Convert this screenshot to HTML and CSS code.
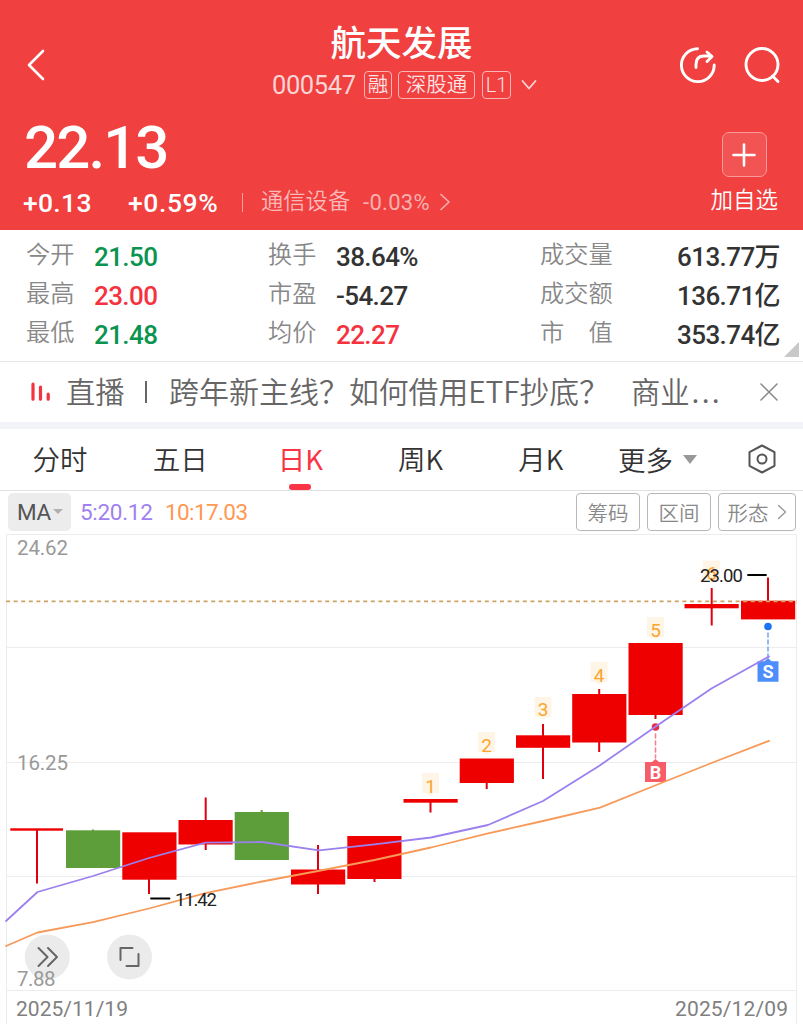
FILE: index.html
```html
<!DOCTYPE html>
<html lang="zh-CN">

<head>
    <meta charset="utf-8">
    <meta name="viewport" content="width=device-width, initial-scale=1" />
    <title>航天发展 000547</title>
    <link rel="stylesheet" href="styles.css">
</head>

<body>
    <header class="head">
        <div class="bar">
            <svg class="back" width="20" height="32" viewBox="0 0 20 32"><path d="M17 2 3 16l14 14" /></svg>
            <div class="title">
                <h1>航天发展</h1>
                <div class="code">
                    <span class="num">000547</span>
                    <span class="tag">融</span>
                    <span class="tag wide">深股通</span>
                    <span class="tag l1">L1</span>
                    <svg width="16" height="12" viewBox="0 0 16 12"><path d="m1.500 2 6.500 7.500L14.500 2" /></svg>
                </div>
            </div>
            <div class="tools">
                <svg width="38" height="38" viewBox="0 0 38 38">
                    <path d="M18.500 2.800A16.400 16.400 0 1 0 35.200 19" />
                    <path d="M17 21.500v-3c0-5.500 3-8.500 8-8.500h6.500M28 6l5 4.500-5 5" />
                </svg>
                <svg width="38" height="38" viewBox="0 0 38 38">
                    <circle cx="19" cy="18.500" r="16" />
                    <path d="m29.500 30 5.500 5.500" />
                </svg>
            </div>
        </div>
        <div class="quote">
            <div>
                <div class="price">22.13</div>
                <div class="change">
                    <b class="diff">+0.13</b>
                    <b class="pct">+0.59%</b>
                    <i class="sep"></i>
                    <span class="sector">通信设备</span>
                    <span class="sector-pct">-0.03%</span>
                    <svg width="10" height="18" viewBox="0 0 10 18"><path d="m1 1.500 8 7.500-8 7.500" /></svg>
                </div>
            </div>
            <div class="add">
                <button><svg width="24" height="24" viewBox="0 0 24 24"><path d="M12 1.500v21M1.500 12h21" /></svg></button>
                <span>加自选</span>
            </div>
        </div>
    </header>

    <section class="stats">
        <dl>
            <dt>今开</dt><dd class="down">21.50</dd>
            <dt>最高</dt><dd class="up">23.00</dd>
            <dt>最低</dt><dd class="down">21.48</dd>
        </dl>
        <dl>
            <dt>换手</dt><dd>38.64%</dd>
            <dt>市盈</dt><dd>-54.27</dd>
            <dt>均价</dt><dd class="up">22.27</dd>
        </dl>
        <dl class="last">
            <dt>成交量</dt><dd>613.77万</dd>
            <dt>成交额</dt><dd>136.71亿</dd>
            <dt>市　值</dt><dd>353.74亿</dd>
        </dl>
        <i class="corner"></i>
    </section>

    <section class="news">
        <svg class="live" width="20" height="20" viewBox="0 0 20 20"><path d="M3 2.200v15M10.500 5.200v12M18.200 12.200v5" /></svg>
        <span class="live-label">直播</span>
        <i class="bar-sep"></i>
        <span class="topic">跨年新主线？</span>
        <span class="topic2">如何借用ETF抄底？</span>
        <span class="topic3">商业<span class="dots">...</span></span>
        <svg class="close" width="18" height="18" viewBox="0 0 18 18"><path d="m1 1 16 16M17 1 1 17" /></svg>
    </section>

    <nav class="tabs">
        <a>分时</a>
        <a>五日</a>
        <a class="on">日K</a>
        <a>周K</a>
        <a>月K</a>
        <a class="more">更多<i class="tri"></i></a>
        <svg class="gear" width="28" height="30" viewBox="0 0 28 30">
            <path d="M14 1.500 26.500 8.200v13.600L14 28.500 1.500 21.800V8.200z" />
            <circle cx="14" cy="15" r="4.500" />
        </svg>
    </nav>

    <div class="ma">
        <span class="ma-btn">MA<i class="tri small"></i></span>
        <span class="ma5">5:20.12</span>
        <span class="ma10">10:17.03</span>
        <span class="opts">
            <span class="opt">筹码</span>
            <span class="opt">区间</span>
            <span class="opt shape">形态<svg width="10" height="16" viewBox="0 0 10 16"><path d="m1.500 1.500 7 6.500-7 6.500" /></svg></span>
        </span>
    </div>

    <svg class="chart" width="803" height="492" viewBox="0 532 803 492">
        <path class="grid" d="M6.500 1024V534.500h790V1024M6.500 647.500h790M6.500 762.500h790M6.500 876.500h790M6.500 990.500h790" />

        <text class="axis" x="17" y="554.500" textLength="51">24.62</text>
        <text class="axis" x="17" y="770" textLength="51">16.25</text>

        <!-- streak numbers -->
        <g class="streak">
            <path d="M422 773h17v20h-5l-3.500 3-3.500-3h-5zM478 732h17v20h-5l-3.500 3-3.500-3h-5zM534.500 697h17v20h-5l-3.500 3-3.500-3h-5zM590.500 662h17v20h-5l-3.500 3-3.500-3h-5zM647 617h17v20h-5l-3.500 3-3.500-3h-5zM703 560.500h17v20h-5l-3.500 3-3.500-3h-5z" />
            <text x="430.500" y="792.500">1</text>
            <text x="486.500" y="751.500">2</text>
            <text x="543" y="716">3</text>
            <text x="599" y="681.500">4</text>
            <text x="655.500" y="636.500">5</text>
            <text x="711.500" y="580">6</text>
        </g>

        <!-- candles -->
        <g class="rise">
            <path d="M37 830v53.500M149 833v61M205.700 797.500V850M318 845v49M374.500 837v45M430.500 800v12.500M486.700 759v30M543 724v55M599.200 689v63M655.500 644v75M711.700 588v37.500M768 577.500V619" />
            <rect x="10.300" y="828.300" width="52.700" height="2.400" />
            <rect x="122.300" y="832.300" width="54.200" height="47.400" />
            <rect x="178.500" y="820" width="54.200" height="24.500" />
            <rect x="291" y="869.500" width="54.200" height="15" />
            <rect x="347.300" y="836" width="54.200" height="43" />
            <rect x="403.500" y="799" width="54.200" height="3.700" />
            <rect x="459.700" y="758.500" width="54.200" height="24.500" />
            <rect x="516" y="735.300" width="54.200" height="12.500" />
            <rect x="572.200" y="694" width="54.200" height="48.500" />
            <rect x="628.500" y="643" width="54.200" height="72" />
            <rect x="684.500" y="604" width="54.200" height="4.300" />
            <rect x="741" y="600.700" width="54.200" height="18.700" />
        </g>
        <g class="fall">
            <path d="M93 829.500v2M261.700 810v3" />
            <rect x="66" y="830.300" width="54.200" height="37.700" />
            <rect x="234.700" y="812" width="54.200" height="48" />
        </g>

        <path class="last-line" d="M6 601.300h791" />

        <!-- buy / sell marks -->
        <circle cx="655.500" cy="727" r="3.800" fill="#e92c45" />
        <path d="M655.500 734v24" stroke="#f0838b" stroke-width="1.600" stroke-dasharray="4 3" />
        <path d="M645 762h7l3.500-3 3.500 3h7v20h-21z" fill="#f65d68" />
        <text class="mark" x="655.500" y="778.500">B</text>
        <circle cx="768" cy="626.500" r="3.800" fill="#1c74f5" />
        <path d="M768 633v25" stroke="#79a7f6" stroke-width="1.600" stroke-dasharray="4 3" />
        <path d="M757.500 661.300h7l3.500-3 3.500 3h7v20.500h-21z" fill="#4e8efc" />
        <text class="mark" x="768" y="678.300">S</text>

        <polyline class="line5" points="6,921 37.500,892 93,876 149,858 205.500,842.700 262,842 319,850.300 374.500,844.300 431,837.500 488,825 543,801 599,766 655,727 711.500,688.500 769,656.500" />
        <polyline class="line10" points="6,946 37.500,932.500 93,922.200 149,908.500 205.500,893.200 262,881.500 318,871 374.500,860 431,847.500 487,833.700 543,821 600,807.600 655,785.500 711.500,763 769,740.800" />

        <g class="peak">
            <path d="M748 575h18M151 898.500h18.500" />
            <text x="700" y="582" textLength="43">23.00</text>
            <text x="175" y="906" textLength="42">11.42</text>
        </g>

        <circle cx="47.300" cy="957" r="22.500" fill="#ebebeb" />
        <circle cx="129.500" cy="957" r="22.500" fill="#ebebeb" />
        <path class="ico" d="m38.500 948 9 9-9 9M48 948l9 9-9 9M120.500 960v-12h12M138.500 954v12h-12" />
        <text class="axis" x="17" y="985.500" textLength="38.500">7.88</text>

        <text class="date" x="16" y="1016" textLength="112">2025/11/19</text>
        <text class="date" x="675" y="1016" textLength="113">2025/12/09</text>
    </svg>
</body>

</html>
```

FILE: styles.css
```css
* {
    box-sizing: border-box;
}

body {
    margin: 0;
    width: 803px;
    height: 1024px;
    overflow: hidden;
    background: #fff;
    color: #333;
    font-family: Roboto, "Noto Sans CJK SC", sans-serif;
    white-space: nowrap;
}

svg {
    display: block;
    flex: none;
    fill: none;
    stroke-linecap: round;
    stroke-linejoin: round;
}

i {
    display: block;
    flex: none;
}

/* header */
.head {
    height: 229.5px;
    background: #f04040;
    color: #fff;
}

.head svg {
    stroke: #fff;
    stroke-width: 2.6;
}

.bar {
    height: 112px;
    display: grid;
    grid-template-columns: 200px 1fr 200px;
    padding-top: 16px;
}

.back {
    margin: 33px 0 0 26px;
}

h1 {
    margin: 0;
    font-size: 35.5px;
    font-weight: 500;
    line-height: 50px;
    text-align: center;
    font-family: "Noto Sans CJK SC", sans-serif;
}

.code {
    display: flex;
    align-items: center;
    height: 38px;
    padding-left: 72px;
}

.code .num {
    font-size: 25.5px;
    width: 92px;
    letter-spacing: -.4px;
    color: #fbd4d4;
}

.tag {
    height: 28px;
    width: 28px;
    margin-right: 6px;
    border: 1.5px solid #f9b5b5;
    border-radius: 4px;
    font-size: 20.5px;
    font-weight: 350;
    line-height: 26px;
    text-align: center;
    color: #fde3e3;
}

.tag.wide {
    width: 77px;
    margin-right: 7px;
}

.tag.l1 {
    width: 29px;
    font-size: 20px;
    margin-right: 10px;
}

.code svg {
    stroke-width: 1.8;
    stroke: #fbd4d4;
}

.tools {
    display: flex;
    gap: 26px;
    padding: 30px 0 0 76px;
}

.tools svg {
    stroke-width: 2.9;
}

.quote {
    display: flex;
    justify-content: space-between;
}

.price {
    padding-left: 24px;
    font-size: 60px;
    font-weight: 500;
    line-height: 72px;
    letter-spacing: -1.9px;
}

.change {
    display: flex;
    align-items: center;
    height: 36px;
    padding-left: 23px;
    font-size: 26.5px;
}

.change b {
    font-weight: 500;
}

.diff {
    width: 105px;
    letter-spacing: .3px;
}

.pct {
    width: 114px;
    letter-spacing: .6px;
}

.sep {
    width: 1px;
    height: 19px;
    margin-right: 18px;
    background: #f9a0a0;
}

.sector {
    width: 102px;
    font-size: 22.3px;
    font-weight: 350;
    line-height: 32px;
    padding-bottom: 3px;
    color: #fbb9b9;
}

.sector-pct {
    width: 77px;
    font-size: 22px;
    letter-spacing: .3px;
    color: #f8b0b0;
}

.change svg {
    stroke: #f8b0b0;
    stroke-width: 1.6;
}

.add {
    display: flex;
    flex-direction: column;
    align-items: center;
    padding: 20px 25px 0 0;
    font-size: 22.5px;
    font-weight: 350;
    line-height: 47px;
}

.add button {
    display: flex;
    align-items: center;
    justify-content: center;
    width: 45px;
    height: 45px;
    padding: 0;
    border: 1.5px solid #f89a9a;
    border-radius: 7px;
    background: #f25353;
}

/* quote figures */
.stats {
    position: relative;
    display: flex;
    height: 132px;
    padding: 7px 22px 0 26px;
    border-bottom: 1px solid #e6e6e6;
}

dl {
    display: grid;
    grid-template-columns: 68px 1fr;
    grid-auto-rows: 39.3px;
    width: 242px;
    margin: 0;
    line-height: 41px;
}

dl.last {
    width: 240px;
    margin-left: 30px;
    grid-template-columns: 90px 1fr;
}

dt {
    font-size: 24.2px;
    font-weight: 350;
    line-height: 37px;
    color: #888;
}

dd {
    margin: 0;
    font-size: 26px;
    font-weight: 500;
    letter-spacing: -.6px;
}

.last dd {
    text-align: right;
}

.up {
    color: #f4333f;
}

.down {
    color: #0a9450;
}

.corner {
    position: absolute;
    right: 4px;
    bottom: 4px;
    border-left: 15px solid transparent;
    border-bottom: 15px solid #c8c8c8;
}

/* news ticker */
.news {
    display: flex;
    align-items: center;
    height: 67px;
    padding-left: 30px;
    border-bottom: 7px solid #f2f3f8;
    font-family: "Noto Sans CJK SC", sans-serif;
    font-size: 29.3px;
    font-weight: 350;
    color: #666;
}

.news span {
    padding-bottom: 3px;
}

.live {
    stroke: #f4333f;
    stroke-width: 3.2;
    margin-right: 16px;
}

.live-label {
    width: 79px;
}

.bar-sep {
    width: 2px;
    height: 22px;
    margin-right: 22px;
    background: #666;
}

.topic {
    width: 180px;
    font-size: 30px;
}

.topic2 {
    width: 282px;
    font-size: 29.8px;
}

.topic3 {
    width: 129px;
}

.dots {
    letter-spacing: 2.2px;
    margin-left: 2px;
}

.close {
    stroke: #888;
    stroke-width: 1.5;
}

/* period tabs */
.tabs {
    display: flex;
    align-items: center;
    height: 62px;
    border-bottom: 1px solid #e2e2e2;
    font-family: "Noto Sans CJK SC", sans-serif;
    font-size: 27.5px;
    font-weight: 350;
    color: #333;
}

.tabs a {
    position: relative;
    width: 120.2px;
    height: 62px;
    text-align: center;
    line-height: 60px;
}

.tabs .on {
    color: #fb3344;
    font-weight: 400;
}

.on::after {
    content: "";
    position: absolute;
    left: 50%;
    bottom: 0;
    width: 22px;
    height: 6px;
    margin-left: -11px;
    border-radius: 3px;
    background: #fb3344;
}

.tabs .more {
    display: flex;
    align-items: center;
    gap: 10px;
    width: 130px;
    padding-left: 17px;
}

.tri {
    border: 7px solid transparent;
    border-top: 9px solid #999;
    border-bottom: 0;
}

.tri.small {
    border-width: 5px 5px 0;
    border-top-color: #b0b0b0;
}

.gear {
    stroke: #555;
    stroke-width: 2;
    margin-left: 17px;
}

/* moving average row */
.ma {
    display: flex;
    align-items: center;
    height: 41.5px;
    padding: 1px 7px 0 8px;
    font-size: 22.5px;
}

.ma-btn {
    display: flex;
    align-items: center;
    gap: 2px;
    width: 63px;
    height: 38px;
    padding-left: 9px;
    border-radius: 5px;
    background: #ececec;
    color: #555;
    letter-spacing: -.4px;
}

.ma5 {
    width: 85px;
    margin-left: 9px;
    letter-spacing: -.3px;
    color: #a080f0;
}

.ma10 {
    letter-spacing: -.6px;
    color: #ff9850;
}

.opts {
    display: flex;
    gap: 7px;
    margin-left: auto;
}

.opt {
    display: flex;
    align-items: center;
    justify-content: center;
    gap: 8px;
    width: 64px;
    height: 38px;
    border: 1.5px solid #b8b8b8;
    border-radius: 4px;
    font-size: 20.5px;
    font-weight: 350;
    color: #888;
}

.opt.shape {
    width: 78px;
}

.opt svg {
    stroke: #999;
    stroke-width: 1.4;
}

/* k line */
.chart text {
    stroke: none;
    fill: #999;
    font-size: 20.5px;
}

.grid {
    stroke: #ececec;
}

.chart .date {
    font-size: 21px;
    fill: #808080;
}

.streak path {
    fill: #fff5e6;
}

.chart .streak text {
    fill: #f9a530;
    font-size: 19px;
    text-anchor: middle;
}

.rise,
.fall {
    fill: #ee0000;
    stroke-linecap: butt;
}

.rise path {
    stroke: #e00010;
    stroke-width: 2;
}

.fall {
    fill: #5e9e3a;
}

.fall path {
    stroke: #5e9e3a;
    stroke-width: 2;
}

.last-line {
    stroke: #cda463;
    stroke-width: 1.8;
    stroke-dasharray: 4 3.6;
    stroke-linecap: butt;
}

.chart .mark {
    fill: #fff;
    font-size: 18px;
    font-weight: 700;
    text-anchor: middle;
}

.line5,
.line10 {
    stroke: #9b80ee;
    stroke-width: 1.8;
}

.line10 {
    stroke: #f79a59;
}

.peak path {
    stroke: #000;
    stroke-width: 1.8;
}

.chart .peak text {
    fill: #222;
    font-size: 18.5px;
}

.ico {
    stroke: #666;
    stroke-width: 2;
}
```
